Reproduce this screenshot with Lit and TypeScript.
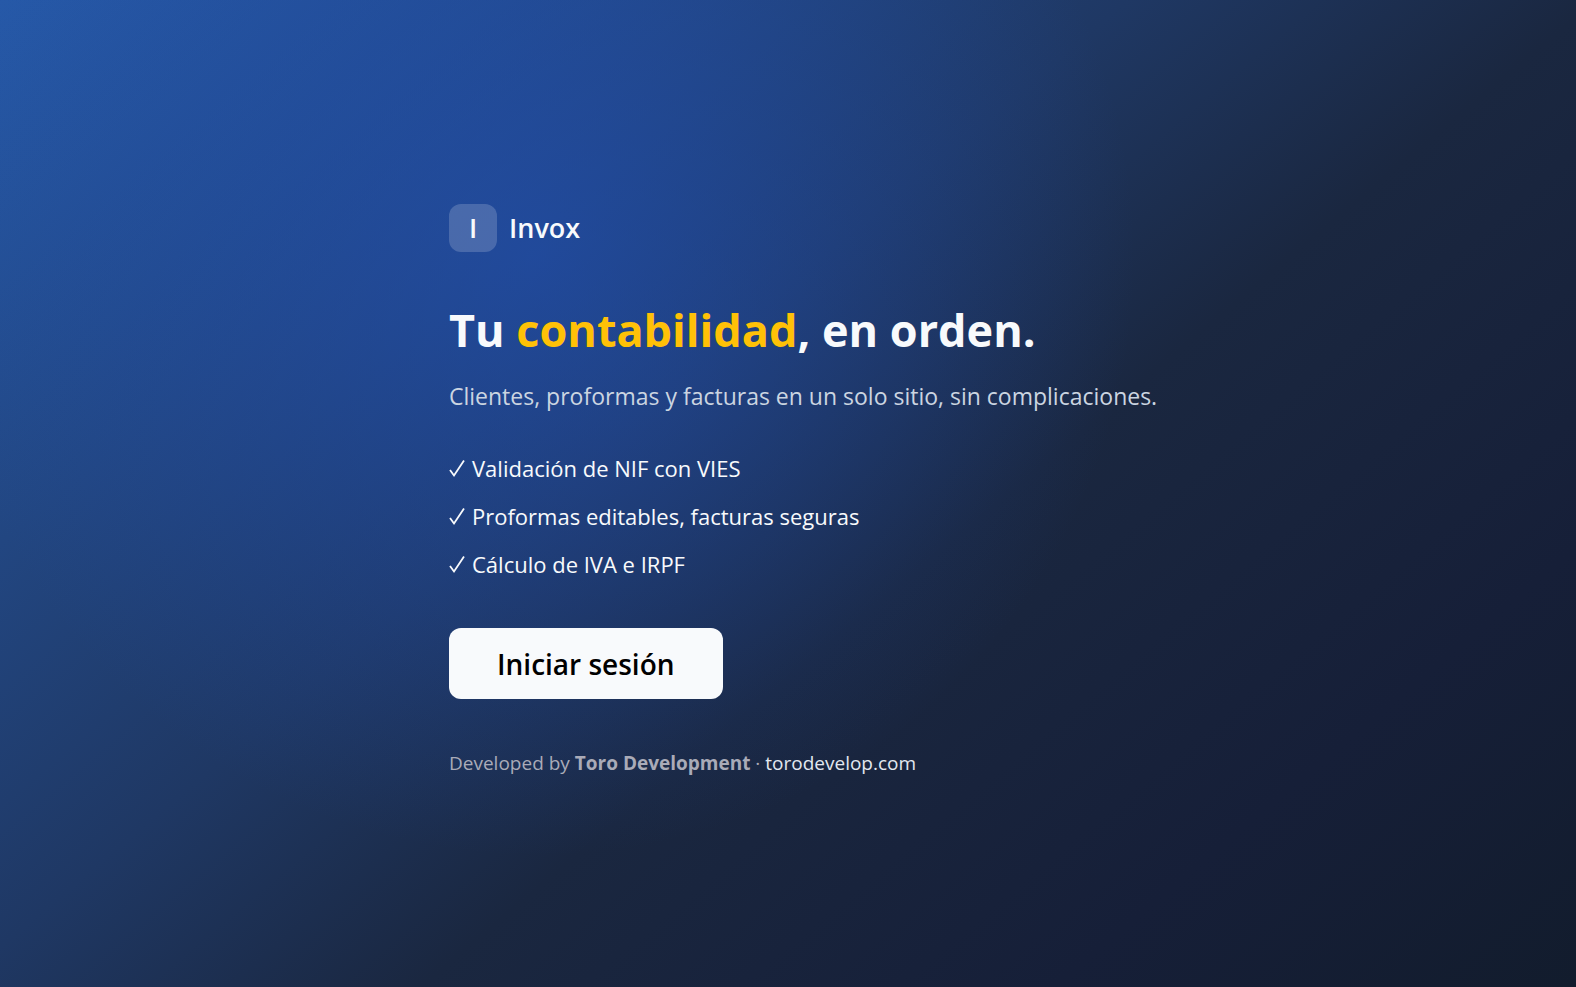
import { LitElement, html, css } from "lit";
import { customElement } from "lit/decorators.js";

const FEATURES = [
  "Validación de NIF con VIES",
  "Proformas editables, facturas seguras",
  "Cálculo de IVA e IRPF",
];

@customElement("app-root")
export class AppRoot extends LitElement {
  static styles = css`
    :host {
      display: block;
      font-family: "Segoe UI", "Open Sans", "Noto Sans", sans-serif;
      color: #f8fafc;
    }
    * {
      box-sizing: border-box;
    }
    .page {
      min-height: 100vh;
      display: flex;
      align-items: center;
      justify-content: center;
      padding: 32px 0 36px 32px;
      background:
        radial-gradient(circle at 34% 26%, rgba(33, 80, 182, 0.58), transparent 600px),
        linear-gradient(140deg, #2659a8 0%, #1f3864 41%, #1a2740 58%, #161f38 81%, #121c2d 100%);
    }
    .hero {
      width: 710px;
      max-width: 100%;
    }
    .brand {
      display: flex;
      align-items: center;
      gap: 12px;
      margin-bottom: 48px;
      font-size: 27px;
      line-height: 36px;
      font-weight: 600;
    }
    .mark {
      width: 48px;
      height: 48px;
      border-radius: 12px;
      display: grid;
      place-items: center;
      background: rgba(255, 255, 255, 0.18);
    }
    h1 {
      margin: 0 0 16px;
      font-size: 45px;
      line-height: 60px;
      font-weight: 700;
    }
    .accent {
      color: #ffc107;
    }
    .lead {
      margin: 0 0 36px;
      font-size: 23px;
      line-height: 40px;
      color: #cbd5e1;
    }
    ul {
      list-style: none;
      margin: 0 0 48px;
      padding: 0;
      display: grid;
      gap: 16px;
      font-size: 22px;
      line-height: 32px;
    }
    li {
      display: flex;
      align-items: center;
      gap: 7px;
    }
    .tick {
      width: 16px;
      height: 20px;
      fill: none;
      stroke: currentColor;
      stroke-width: 1.8;
    }
    button {
      display: block;
      margin: 0 0 48px;
      padding: 16px 48px 15px;
      border: 0;
      border-radius: 12px;
      background: #f8fafc;
      color: #000;
      font: inherit;
      font-size: 28px;
      line-height: 40px;
      font-weight: 600;
      cursor: pointer;
    }
    .credit {
      margin: 0;
      font-size: 19px;
      line-height: 32px;
      color: #a9abb8;
    }
    .credit a {
      color: #e2e8f0;
      text-decoration: none;
    }
  `;

  render() {
    return html`
      <main class="page">
        <div class="hero">
          <div class="brand"><span class="mark">I</span><span>Invox</span></div>
          <h1>Tu <span class="accent">contabilidad</span>, en orden.</h1>
          <p class="lead">Clientes, proformas y facturas en un solo sitio, sin complicaciones.</p>
          <ul>
            ${FEATURES.map(
              (text) => html`<li>
                <svg class="tick" viewBox="0 0 16 20" aria-hidden="true">
                  <path d="M1 12 L5 17.5 L15 2.5" />
                </svg>
                <span>${text}</span>
              </li>`
            )}
          </ul>
          <button type="button">Iniciar sesión</button>
          <p class="credit">
            Developed by <strong>Toro Development</strong> ·
            <a href="https://torodevelop.com">torodevelop.com</a>
          </p>
        </div>
      </main>
    `;
  }
}
